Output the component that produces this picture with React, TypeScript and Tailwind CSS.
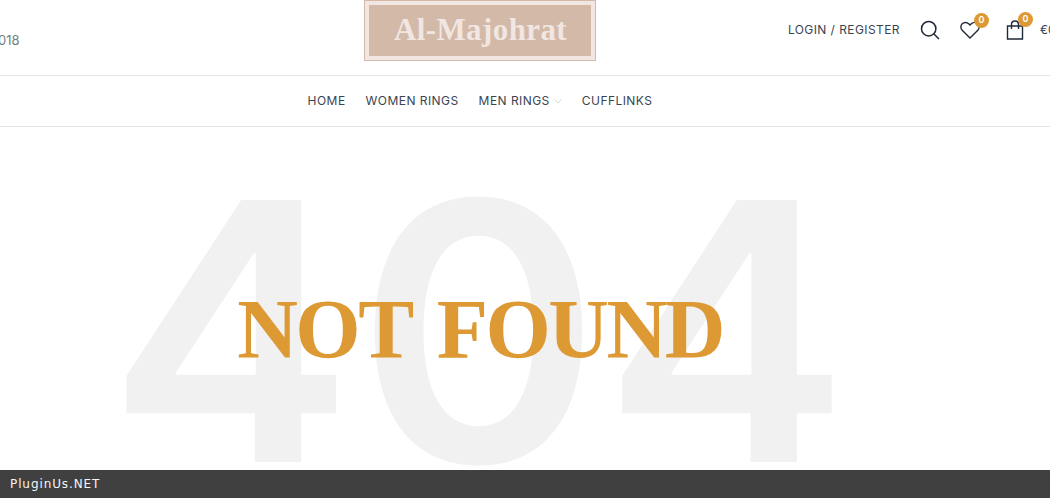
import React from "react";

const sans = "font-['Inter','Noto_Sans',sans-serif]";

export default function App() {
  return (
    <div className={`relative h-[498px] w-[1050px] overflow-hidden bg-white ${sans}`}>
      <header className="flex h-[76px] items-center justify-between border-b border-[#e6e6e6]">
        <span className="ml-[-10px] mt-[6px] w-[32px] text-[13px] text-[#6f7f80]">2018</span>
        <div className="absolute left-[364px] top-0 flex h-[61px] w-[232px] items-center justify-center border border-[#d2b9a8] bg-[#f1e6e1] p-[4px]">
          <div className="flex h-full w-full items-center justify-center bg-[#d2b9a8] pb-[1px] pl-[1px] font-['Liberation_Serif',serif] text-[31px] font-bold tracking-[0.4px] text-[#f1e6e1]">
            Al-Majohrat
          </div>
        </div>
        <div className="mr-[-19px] mt-[-16px] flex items-center">
          <span className="text-[12px] font-normal tracking-[0.42px] text-[#3a4452]">LOGIN / REGISTER</span>
          <svg className="ml-[20px] mt-[1px]" width="20" height="20" viewBox="0 0 20 20" fill="none" stroke="#1f2937" strokeWidth="1.5">
            <circle cx="8.7" cy="8.7" r="7.2" />
            <path d="M14 14l5 5" />
          </svg>
          <div className="relative ml-[20px]">
            <svg width="20" height="18" viewBox="0 0 20 18" fill="none" stroke="#1f2937" strokeWidth="1.4">
              <path d="M10 17L2.2 9.2C0.4 7.4 0.5 4.5 2.2 2.8 4 1 6.9 1 8.7 2.8L10 4.1l1.3-1.3C13.1 1 16 1 17.800 2.800c1.700 1.700 1.800 4.600 0 6.400z" />
            </svg>
            <span className="absolute right-[-9px] top-[-8px] flex h-[15px] w-[15px] items-center justify-center rounded-full bg-[#dd9933] text-[9px] font-semibold text-white">0</span>
          </div>
          <div className="relative ml-[26px]">
            <svg width="18" height="20" viewBox="0 0 18 20" fill="none" stroke="#1f2937" strokeWidth="1.4">
              <path d="M1.500 6h15v13h-15z" />
              <path d="M5.500 9V4.500C5.500 2.500 7 1 9 1s3.500 1.500 3.500 3.500V9" />
            </svg>
            <span className="absolute right-[-9px] top-[-8px] flex h-[15px] w-[15px] items-center justify-center rounded-full bg-[#dd9933] text-[9px] font-semibold text-white">0</span>
          </div>
          <span className="ml-[16px] w-[29px] text-[12px] text-[#3a4452]">€0.00</span>
        </div>
      </header>
      <nav className="flex h-[51px] items-center justify-center gap-[20px] border-b border-[#e6e6e6] pr-[90px] text-[12px] tracking-[0.45px] text-[#3a4452]">
        <span>HOME</span>
        <span>WOMEN RINGS</span>
        <span className="flex items-center gap-[4px]">
          MEN RINGS
          <svg width="8" height="5" viewBox="0 0 8 5" fill="none" stroke="#d9d9d9" strokeWidth="1">
            <path d="M0.500 0.500L4 4l3.500-3.500" />
          </svg>
        </span>
        <span>CUFFLINKS</span>
      </nav>
      <main className="relative flex justify-center overflow-hidden">
        <div className="ml-[-90px] mt-[24px] scale-x-[1.03] text-[360px] font-semibold leading-[1] tracking-[2px] text-[#f1f1f1]">404</div>
        <h1 className="absolute left-0 right-[90px] top-[161px] text-center font-['Liberation_Serif',serif] text-[84px] font-bold leading-[1] tracking-[-2.5px] text-[#dd9933] [word-spacing:8px]">
          NOT FOUND
        </h1>
      </main>
      <footer className="absolute bottom-0 left-0 flex h-[28px] w-full items-center bg-[#404040] pl-[10px] font-['DejaVu_Sans',sans-serif] text-[12px] tracking-[0.9px] text-[#f5f5f5]">
        PluginUs.NET
      </footer>
    </div>
  );
}
